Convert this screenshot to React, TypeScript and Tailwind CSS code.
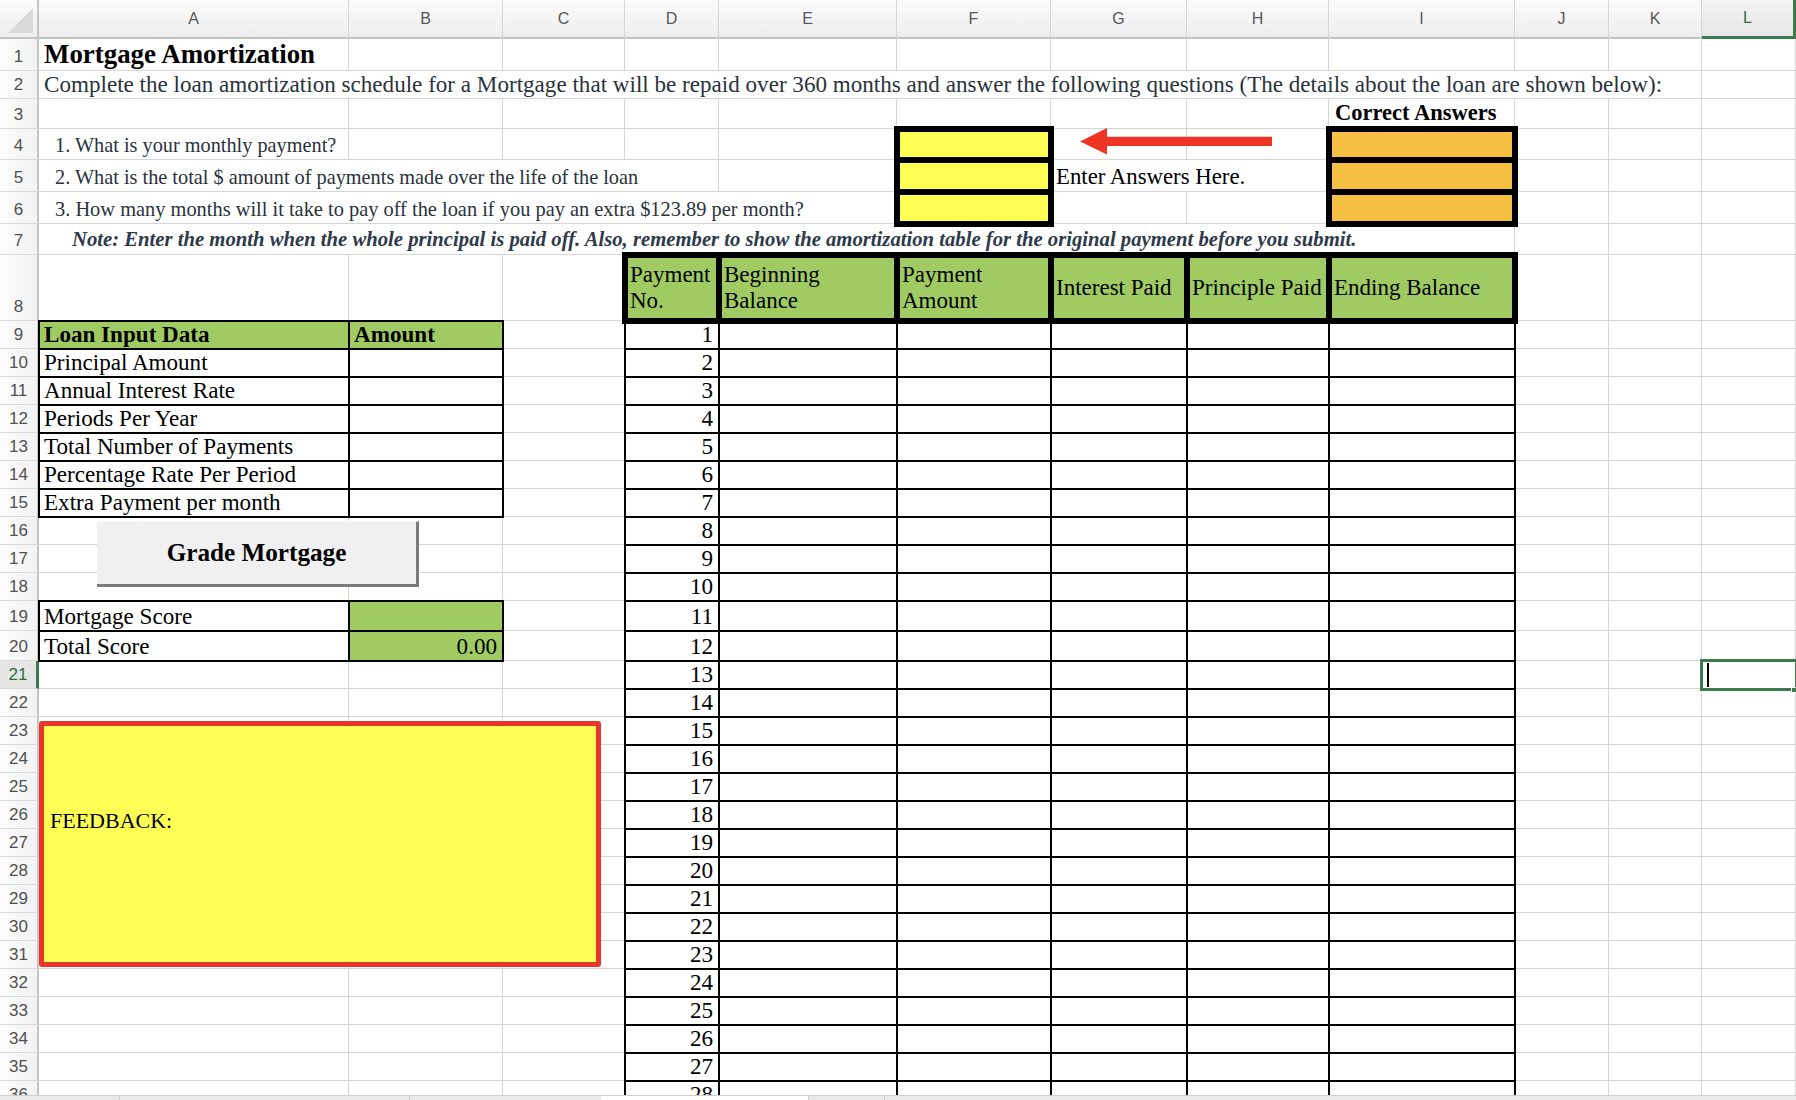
import React from "react";

const G = "border-r border-b border-[#d5d5d5]";
const THIN = "relative z-10 shadow-[0_0_0_1px_#000,inset_0_0_0_1px_#000]";
const THICK = "relative z-20 shadow-[0_0_0_3px_#000,inset_0_0_0_3px_#000]";
const TXT = "flex items-end whitespace-nowrap leading-none";

function RowHead({ n, sel = false }: { n: number; sel?: boolean }) {
  return (
    <div
      className={
        sel
          ? "flex items-end justify-center pb-[5px] leading-none text-[17px] text-[#2f6f3f] bg-[#e6e6e6] border-b border-[#dcdcdc] border-r-[3px] border-r-[#3c7a4b] font-['Liberation_Sans',Arial,sans-serif]"
          : "flex items-end justify-center pb-[5px] leading-none text-[17px] text-[#505050] bg-linear-to-r from-[#fdfdfd] to-[#f2f2f2] border-b border-[#dcdcdc] border-r-2 border-r-[#c4c4c4] font-['Liberation_Sans',Arial,sans-serif]"
      }
    >
      {n}
    </div>
  );
}

function ColHead({ l, sel = false }: { l: string; sel?: boolean }) {
  return (
    <div
      className={
        sel
          ? "flex items-center justify-center text-[16px] text-[#2f6f3f] bg-linear-to-b from-[#f3f3f3] to-[#e6e6e6] border-r-[3px] border-r-[#3c7a4b] border-b-[3px] border-b-[#3c7a4b] font-['Liberation_Sans',Arial,sans-serif]"
          : "flex items-center justify-center text-[16px] text-[#575757] bg-linear-to-b from-[#fbfbfb] to-[#eeeeee] border-r border-r-[#d6d6d6] border-b-2 border-b-[#c4c4c4] font-['Liberation_Sans',Arial,sans-serif]"
      }
    >
      {l}
    </div>
  );
}

const LABELS: Record<number, string> = {
  10: "Principal Amount",
  11: "Annual Interest Rate",
  12: "Periods Per Year",
  13: "Total Number of Payments",
  14: "Percentage Rate Per Period",
  15: "Extra Payment per month",
};

function LeftCells({ r }: { r: number }) {
  if (r === 9) {
    return (
      <>
        <div className={`${THIN} bg-[#9fcb62] ${TXT} font-bold pl-[5px] pb-[3px]`}>Loan Input Data</div>
        <div className={`${THIN} bg-[#9fcb62] ${TXT} font-bold pl-[5px] pb-[3px]`}>Amount</div>
        <div className={G} />
      </>
    );
  }
  if (r >= 10 && r <= 15) {
    return (
      <>
        <div className={`${THIN} bg-white ${TXT} pl-[5px] pb-[3px]`}>{LABELS[r]}</div>
        <div className={`${THIN} bg-white`} />
        <div className={G} />
      </>
    );
  }
  if (r === 19) {
    return (
      <>
        <div className={`${THIN} bg-white ${TXT} pl-[5px] pb-[3px]`}>Mortgage Score</div>
        <div className={`${THIN} bg-[#9fcb62]`} />
        <div className={G} />
      </>
    );
  }
  if (r === 20) {
    return (
      <>
        <div className={`${THIN} bg-white ${TXT} pl-[5px] pb-[3px]`}>Total Score</div>
        <div className={`${THIN} bg-[#9fcb62] ${TXT} justify-end pr-[6px] pb-[3px]`}>0.00</div>
        <div className={G} />
      </>
    );
  }
  return (
    <>
      <div className={G} />
      <div className={G} />
      <div className={G} />
    </>
  );
}

function Selected() {
  return (
    <div className="relative z-20 flex items-center shadow-[0_0_0_2px_#3c7a4b,inset_0_0_0_1px_#3c7a4b]">
      <div className="ml-[5px] w-[2px] h-[24px] bg-black" />
      <div className="absolute right-[-1px] bottom-[-4px] w-[6px] h-[6px] bg-[#3c7a4b] border border-white" />
    </div>
  );
}

export default function App() {
  const body: React.ReactNode[] = [];
  for (let r = 9; r <= 36; r++) {
    body.push(
      <React.Fragment key={r}>
        <RowHead n={r} sel={r === 21} />
        <LeftCells r={r} />
        <div className={`${THIN} bg-white ${TXT} justify-end pr-[6px] pb-[3px]`}>{r - 8}</div>
        <div className={`${THIN} bg-white`} />
        <div className={`${THIN} bg-white`} />
        <div className={`${THIN} bg-white`} />
        <div className={`${THIN} bg-white`} />
        <div className={`${THIN} bg-white`} />
        <div className={G} />
        <div className={G} />
        {r === 21 ? <Selected /> : <div className={G} />}
      </React.Fragment>
    );
  }

  const hdr = "relative z-20 shadow-[0_0_0_3px_#000,inset_0_0_0_3px_#000] bg-[#9fcb62] flex items-center pl-[5px] text-[23px] leading-[26px] text-black whitespace-nowrap";

  return (
    <div className="w-[1796px] h-[1100px] overflow-hidden bg-white font-['Liberation_Serif','Times_New_Roman',serif] text-[23.1px] text-black">
      <div className="relative h-[1095px] overflow-hidden">
        <div className="grid grid-cols-[39px_310px_154px_122px_94px_178px_154px_136px_142px_186px_94px_93px_94px] grid-rows-[39px_32px_28px_30px_31px_32px_32px_31px_66px_repeat(10,28px)_30px_30px_repeat(16,28px)]">
          {/* column headers */}
          <div className="flex items-end justify-end pr-[4px] pb-[4px] bg-linear-to-b from-[#fbfbfb] to-[#eeeeee] border-r-2 border-r-[#c4c4c4] border-b-2 border-b-[#c4c4c4]">
            <div className="w-[25px] h-[25px] bg-[#d9d9d9] [clip-path:polygon(100%_0,100%_100%,0_100%)]" />
          </div>
          {["A", "B", "C", "D", "E", "F", "G", "H", "I", "J", "K"].map((l) => (
            <ColHead key={l} l={l} />
          ))}
          <ColHead l="L" sel />

          {/* row 1 */}
          <RowHead n={1} />
          <div className={`${G} ${TXT} pl-[5px] pb-[2px] font-bold text-[26.9px]`}>Mortgage Amortization</div>
          <div className={G} /><div className={G} /><div className={G} /><div className={G} /><div className={G} />
          <div className={G} /><div className={G} /><div className={G} /><div className={G} /><div className={G} /><div className={G} />

          {/* row 2 */}
          <RowHead n={2} />
          <div className={`${G} ${TXT} col-span-11 pl-[5px] pb-[2px] text-[#2a323c]`}>
            Complete the loan amortization schedule for a Mortgage that will be repaid over 360 months and answer the following questions (The details about the loan are shown below):
          </div>
          <div className={G} />

          {/* row 3 */}
          <RowHead n={3} />
          <div className={G} /><div className={G} /><div className={G} /><div className={G} />
          <div className={G} /><div className={G} /><div className={G} /><div className={G} />
          <div className={`${G} ${TXT} pl-[6px] pb-[4px] font-bold text-[22.5px]`}>Correct Answers</div>
          <div className={G} /><div className={G} /><div className={G} />

          {/* row 4 */}
          <RowHead n={4} />
          <div className={`${G} ${TXT} pl-[16px] pb-[4px] text-[20.3px] text-[#2a323c]`}>1. What is your monthly payment?</div>
          <div className={G} /><div className={G} /><div className={G} /><div className={G} />
          <div className={`${THICK} bg-[#ffff55]`} />
          <div className={G} /><div className={G} />
          <div className={`${THICK} bg-[#f5c043]`} />
          <div className={G} /><div className={G} /><div className={G} />

          {/* row 5 */}
          <RowHead n={5} />
          <div className={`${G} ${TXT} col-span-4 pl-[16px] pb-[4px] text-[20.3px] text-[#2a323c]`}>
            2. What is the total $ amount of payments made over the life of the loan
          </div>
          <div className={G} />
          <div className={`${THICK} bg-[#ffff55]`} />
          <div className={`${G} ${TXT} col-span-2 pl-[5px] pb-[2px] text-[22.8px]`}>Enter Answers Here.</div>
          <div className={`${THICK} bg-[#f5c043]`} />
          <div className={G} /><div className={G} /><div className={G} />

          {/* row 6 */}
          <RowHead n={6} />
          <div className={`${G} ${TXT} col-span-5 pl-[16px] pb-[4px] text-[20.4px] text-[#2a323c]`}>
            3. How many months will it take to pay off the loan if you pay an extra $123.89 per month?
          </div>
          <div className={`${THICK} bg-[#ffff55]`} />
          <div className={G} /><div className={G} />
          <div className={`${THICK} bg-[#f5c043]`} />
          <div className={G} /><div className={G} /><div className={G} />

          {/* row 7 */}
          <RowHead n={7} />
          <div className={`${G} ${TXT} col-span-9 pl-[33px] pb-[4px] text-[20.7px] font-bold italic text-[#2e3a4a]`}>
            Note: Enter the month when the whole principal is paid off. Also, remember to show the amortization table for the original payment before you submit.
          </div>
          <div className={G} /><div className={G} /><div className={G} />

          {/* row 8 */}
          <RowHead n={8} />
          <div className={G} /><div className={G} /><div className={G} />
          <div className={hdr}>Payment<br />No.</div>
          <div className={hdr}>Beginning<br />Balance</div>
          <div className={hdr}>Payment<br />Amount</div>
          <div className={hdr}>Interest Paid</div>
          <div className={hdr}>Principle Paid</div>
          <div className={hdr}>Ending Balance</div>
          <div className={G} /><div className={G} /><div className={G} />

          {body}
        </div>

        {/* arrow */}
        <svg className="absolute z-30 left-[1080px] top-[128px]" width="193" height="27" viewBox="0 0 193 27">
          <polygon points="0,13.5 27,0 27,8.7 192,8.7 192,18 27,18 27,26.5" fill="#ee3524" />
        </svg>

        {/* button */}
        <div className="absolute z-30 left-[97px] top-[521px] w-[322px] h-[66px] bg-[#f0f0f0] border-r-[3px] border-b-[3px] border-r-[#7b7b7b] border-b-[#7b7b7b] border-t border-t-[#fafafa] flex items-center justify-center">
          <span className="font-bold text-[25.2px] leading-none text-black">Grade Mortgage</span>
        </div>

        {/* feedback */}
        <div className="absolute z-30 left-[39px] top-[721px] w-[562px] h-[246px] border-[5px] border-[#e8352b] rounded-[3px] bg-[#ffff55]">
          <div className="pl-[6px] pt-[84px] text-[22px] leading-none text-black">FEEDBACK:</div>
        </div>
      </div>

      {/* bottom strip */}
      <div className="h-[5px] flex border-t border-[#cfcfcf]">
        <div className="w-[120px] bg-[#e9e9e9] border-r border-[#cfcfcf]" />
        <div className="w-[290px] bg-[#e9e9e9] border-r border-[#cfcfcf]" />
        <div className="w-[191px] bg-[#e9e9e9]" />
        <div className="w-[207px] bg-white" />
        <div className="w-[77px] bg-[#e9e9e9] border-l border-r border-[#cfcfcf]" />
        <div className="flex-1 bg-[#e9e9e9]" />
      </div>
    </div>
  );
}
